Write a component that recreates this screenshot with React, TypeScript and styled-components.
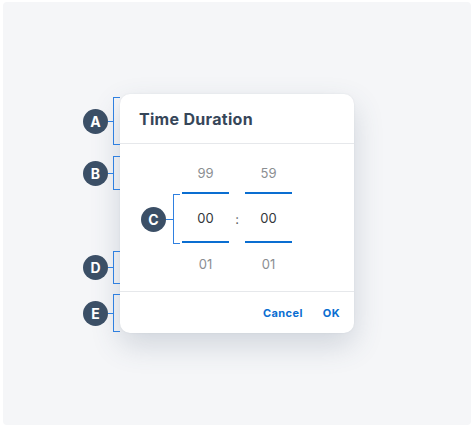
import React from "react";
import styled, { createGlobalStyle } from "styled-components";

const GlobalStyle = createGlobalStyle`
  html, body {
    margin: 0;
    padding: 0;
    background: #ffffff;
  }
  body {
    font-family: "Inter", "Noto Sans", "Liberation Sans", sans-serif;
  }
`;

const Canvas = styled.div`
  width: 474px;
  height: 428px;
  padding: 2px 3px 3px 3px;
  box-sizing: border-box;
`;

const Stage = styled.div`
  height: 100%;
  border-radius: 4px;
  background: #f5f6f8;
  display: flex;
  align-items: center;
  justify-content: center;
`;

//
// dialog
/////////////////////////////////////////////////////////////////////////////////
const Dialog = styled.div`
  position: relative;
  width: 234px;
  background: #ffffff;
  border-radius: 10px;
  box-shadow: 0 12px 30px rgba(60, 80, 110, 0.2), 0 0 2px rgba(40, 50, 70, 0.08);
  display: flex;
  flex-direction: column;
`;

const Header = styled.div`
  height: 50px;
  box-sizing: border-box;
  padding: 0 19px;
  display: flex;
  align-items: center;
  border-bottom: 1px solid #e6e8eb;
`;

const Title = styled.h1`
  margin: 0;
  font-size: 16px;
  font-weight: 700;
  color: #364659;
  letter-spacing: 0.3px;
`;

const Body = styled.div`
  padding: 19px 0 17px;
  display: flex;
  align-items: center;
  justify-content: center;
`;

const Column = styled.div`
  width: 47px;
  display: flex;
  flex-direction: column;
  align-items: stretch;
`;

const Value = styled.div<{ $gray?: boolean }>`
  height: ${(p) => (p.$gray ? "20px" : "47px")};
  display: flex;
  align-items: center;
  justify-content: center;
  font-size: 13px;
  color: ${(p) => (p.$gray ? "#8b8e92" : "#32363a")};
`;

const Line = styled.div<{ $gap: number; $after?: boolean }>`
  height: 2px;
  background: #0a6ed1;
  ${(p) => (p.$after ? `margin-bottom: ${p.$gap}px;` : `margin-top: ${p.$gap}px;`)}
`;

const Separator = styled.div`
  width: 16px;
  display: flex;
  align-items: center;
  justify-content: center;
  font-size: 13px;
  color: #5a5e63;
`;

const Footer = styled.div`
  height: 41px;
  border-top: 1px solid #e6e8eb;
  padding: 0 14px 0 0;
  display: flex;
  align-items: center;
  justify-content: flex-end;
  gap: 20px;
`;

const TextButton = styled.button`
  border: 0;
  background: none;
  padding: 0;
  font-family: inherit;
  font-size: 11px;
  font-weight: 700;
  letter-spacing: 0.4px;
  color: #0a6ed1;
  cursor: pointer;
`;

//
// annotation markers
/////////////////////////////////////////////////////////////////////////////////
const Marker = styled.div<{ $left: number; $top: number; $height: number }>`
  position: absolute;
  left: ${(p) => p.$left}px;
  top: ${(p) => p.$top}px;
  height: ${(p) => p.$height}px;
  display: flex;
  align-items: center;
`;

const Badge = styled.div`
  width: 25px;
  height: 25px;
  border-radius: 50%;
  background: #3b4f66;
  color: #ffffff;
  font-size: 14px;
  font-weight: 700;
  display: flex;
  align-items: center;
  justify-content: center;
  flex-shrink: 0;
`;

const Connector = styled.div<{ $width: number }>`
  width: ${(p) => p.$width}px;
  height: 1px;
  background: #2f80e0;
`;

const Bracket = styled.div`
  width: 7px;
  align-self: stretch;
  box-sizing: border-box;
  border: 1px solid #2f80e0;
  border-right: 0;
`;

type Note = { letter: string; left: number; top: number; height: number; link: number };

const notes: Note[] = [
  { letter: "A", left: -37, top: 3, height: 48, link: 5 },
  { letter: "B", left: -37, top: 62, height: 34, link: 5 },
  { letter: "C", left: 21, top: 100, height: 50, link: 7 },
  { letter: "D", left: -37, top: 157, height: 33, link: 5 },
  { letter: "E", left: -37, top: 200, height: 38, link: 5 },
];

const Spinner = ({ up, value, down }: { up: string; value: string; down: string }) => (
  <Column>
    <Value $gray>{up}</Value>
    <Line $gap={9} />
    <Value>{value}</Value>
    <Line $gap={11} $after />
    <Value $gray>{down}</Value>
  </Column>
);

const App = () => {
  return (
    <>
      <GlobalStyle />
      <Canvas>
        <Stage>
          <Dialog>
            <Header>
              <Title>Time Duration</Title>
            </Header>
            <Body>
              <Spinner up="99" value="00" down="01" />
              <Separator>:</Separator>
              <Spinner up="59" value="00" down="01" />
            </Body>
            <Footer>
              <TextButton>Cancel</TextButton>
              <TextButton>OK</TextButton>
            </Footer>
            {notes.map((n) => (
              <Marker key={n.letter} $left={n.left} $top={n.top} $height={n.height}>
                <Badge>{n.letter}</Badge>
                <Connector $width={n.link} />
                <Bracket />
              </Marker>
            ))}
          </Dialog>
        </Stage>
      </Canvas>
    </>
  );
};

export default App;
